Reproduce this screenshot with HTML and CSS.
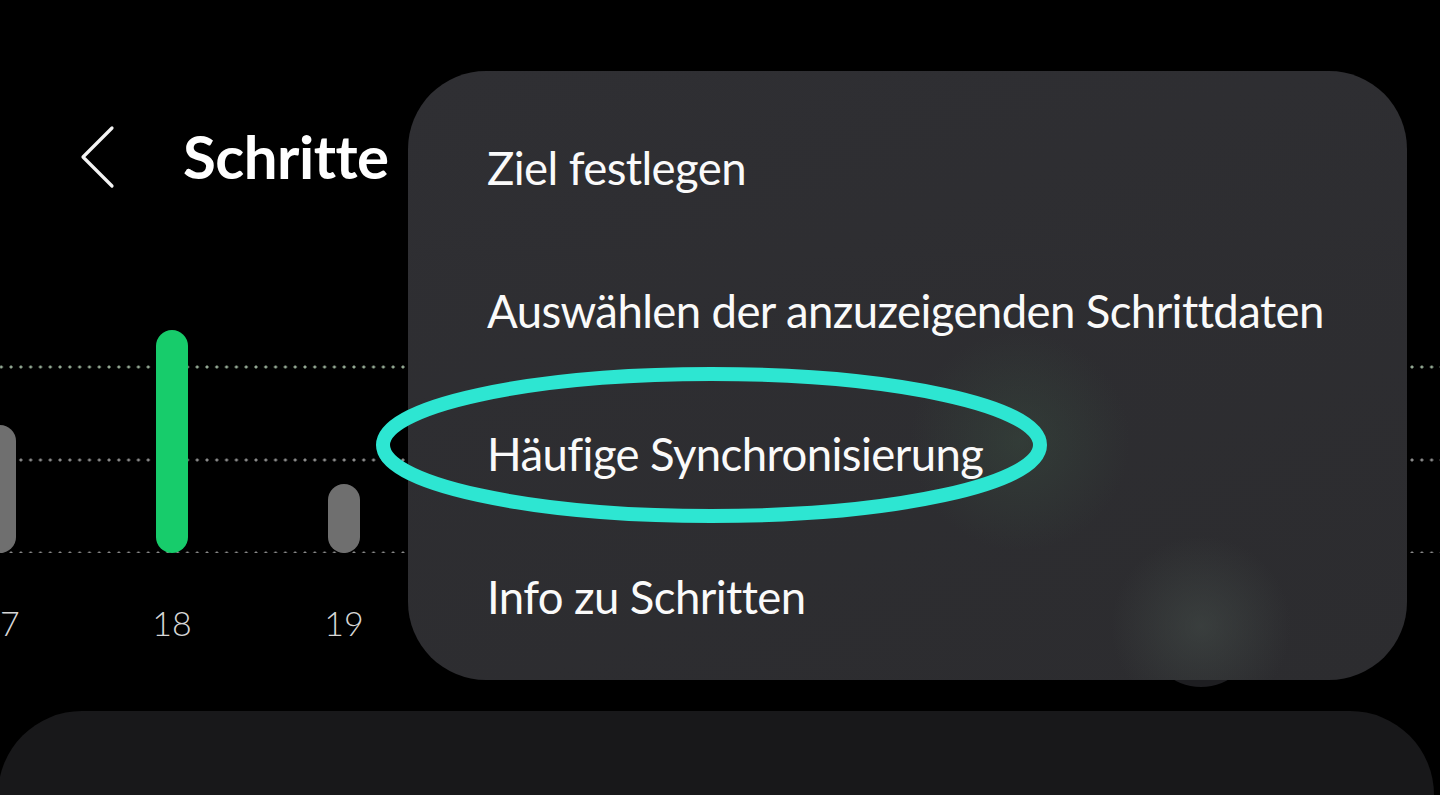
FILE: index.html
```html
<!DOCTYPE html>
<html lang="de">
<head>
  <meta charset="UTF-8">
  <title>Schritte</title>
  <link rel="stylesheet" href="styles.css">
</head>
<body>
  <div class="screen">
    <header class="top-bar">
      <button class="back-btn" aria-label="Zurück">
        <svg width="40" height="70" viewBox="0 0 40 70">
          <polyline points="32,7 3,36 32,65" fill="none" stroke="#f4f4f4" stroke-width="3.2" stroke-linecap="round" stroke-linejoin="round"/>
        </svg>
      </button>
      <h1>Schritte</h1>
    </header>

    <div class="chart">
      <div class="bars">
        <div class="col"><div class="bar" style="height: 128px"></div></div>
        <div class="col"><div class="bar today" style="height: 223px"></div></div>
        <div class="col"><div class="bar" style="height: 69px"></div></div>
      </div>
      <div class="labels">
        <span>17</span>
        <span>18</span>
        <span>19</span>
      </div>
    </div>

    <div class="fab-shadow"></div>

    <section class="card"></section>

    <div class="popup-menu">
      <div class="menu-item">Ziel festlegen</div>
      <div class="menu-item">Auswählen der anzuzeigenden Schrittdaten</div>
      <div class="menu-item">Häufige Synchronisierung</div>
      <div class="menu-item">Info zu Schritten</div>
    </div>

    <svg class="highlight" width="700" height="180" viewBox="0 0 700 180">
      <ellipse cx="341.5" cy="85" rx="328.5" ry="71" fill="none" stroke="#2de6d2" stroke-width="14"/>
    </svg>
  </div>
</body>
</html>
```

FILE: styles.css
```css
html, body {
  margin: 0;
  background: #000;
  overflow: hidden;
}
body {
  font-family: "Lato", "Noto Sans", sans-serif;
  color: #fff;
}
.screen {
  position: relative;
  width: 1440px;
  height: 795px;
  overflow: hidden;
}

/* header */
.top-bar {
  display: flex;
  align-items: center;
  height: 70px;
  padding: 121px 0 0 80px;
}
.back-btn {
  background: none;
  border: none;
  padding: 0;
  width: 40px;
  height: 70px;
  cursor: pointer;
}
.back-btn svg {
  display: block;
}
.top-bar h1 {
  margin: 0 0 0 63px;
  font-size: 60px;
  font-weight: 700;
  letter-spacing: -0.5px;
  line-height: 70px;
}

/* chart */
.chart {
  margin-top: 139px;
}
.bars {
  display: flex;
  align-items: flex-end;
  height: 223px;
  margin-left: -86px;
  background-image:
    radial-gradient(circle, #93a893 1.3px, transparent 1.8px),
    radial-gradient(circle, #8a8a8a 1.3px, transparent 1.8px),
    radial-gradient(circle, #8a8a8a 1.3px, transparent 1.8px);
  background-size: 9.8px 4px;
  background-repeat: repeat-x;
  background-position: 4px 35px, 4px 128px, 4px 221px;
}
.col {
  display: flex;
  justify-content: center;
  width: 172px;
  flex: none;
}
.bar {
  width: 32px;
  border-radius: 16px;
  background: #6f6f6f;
}
.bar.today {
  background: #17cc6b;
}
.labels {
  display: flex;
  margin-left: -86px;
  margin-top: 50px;
}
.labels span {
  width: 172px;
  flex: none;
  text-align: center;
  font-size: 34px;
  font-weight: 300;
  color: #d6d6d6;
  line-height: 40px;
}

/* bottom card */
.card {
  margin: 68px 6px 0 -2px;
  height: 200px;
  background: #18181a;
  border-radius: 84px 84px 0 0;
}

/* dark button peeking out under the menu */
.fab-shadow {
  position: absolute;
  left: 1147px;
  top: 579px;
  width: 108px;
  height: 108px;
  border-radius: 50%;
  background: #1e1e21;
}

/* overflow menu */
.popup-menu {
  position: absolute;
  left: 408px;
  top: 71px;
  width: 999px;
  height: 609px;
  box-sizing: border-box;
  padding: 25px 0 12px 79px;
  border-radius: 78px;
  background:
    radial-gradient(circle at 612px 370px, rgba(58, 82, 66, 0.4), rgba(58, 82, 66, 0) 110px),
    radial-gradient(circle at 793px 555px, rgba(66, 74, 71, 0.6), rgba(66, 74, 71, 0) 90px),
    linear-gradient(160deg, #2f2f33, #2c2c2f);
}
.menu-item {
  height: 143px;
  display: flex;
  align-items: center;
  font-size: 45.5px;
  letter-spacing: -0.6px;
  color: #fafafa;
}

.highlight {
  position: absolute;
  left: 370px;
  top: 360px;
}
```
